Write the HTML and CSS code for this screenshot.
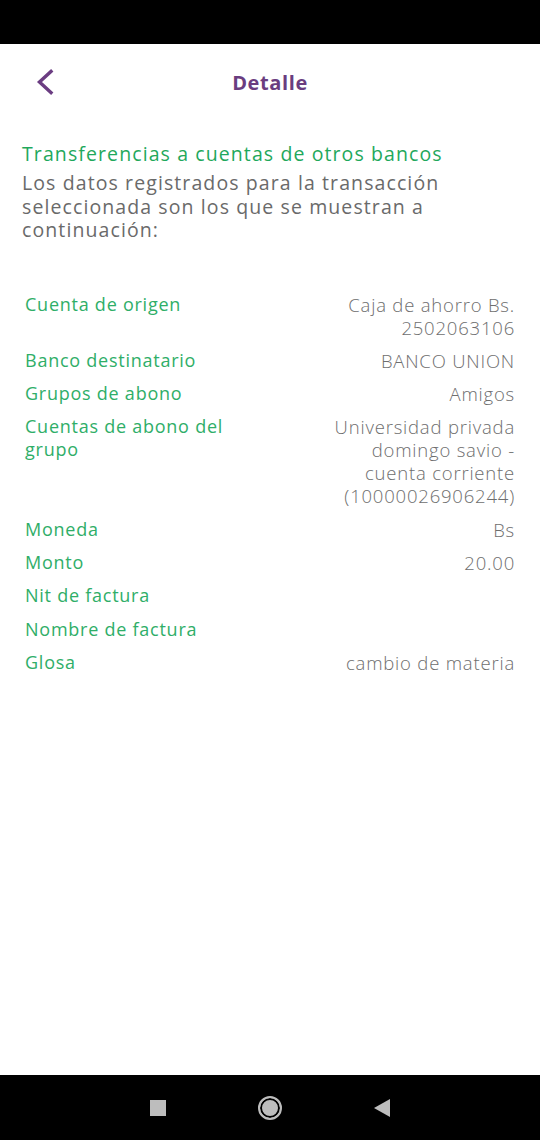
FILE: index.html
```html
<!DOCTYPE html>
<html lang="es">
<head>
<meta charset="utf-8">
<title>Detalle</title>
<link rel="stylesheet" href="styles.css">
</head>
<body>
<div class="screen">
  <div class="statusbar"></div>
  <main class="content">
    <header class="topbar">
      <button class="back" aria-label="Volver">
        <svg width="22" height="28" viewBox="0 0 22 28"><path d="M17 3.5 L5.5 14 L17 24.5" fill="none" stroke="#6b3d82" stroke-width="3.4" stroke-linecap="square" stroke-linejoin="miter"/></svg>
      </button>
      <h1 class="title">Detalle</h1>
    </header>
    <section class="intro">
      <h2 class="heading">Transferencias a cuentas de otros bancos</h2>
      <p class="desc">Los datos registrados para la transacción seleccionada son los que se muestran a continuación:</p>
    </section>
    <dl class="details">
      <div class="row"><dt>Cuenta de origen</dt><dd>Caja de ahorro Bs. 2502063106</dd></div>
      <div class="row"><dt>Banco destinatario</dt><dd>BANCO UNION</dd></div>
      <div class="row"><dt>Grupos de abono</dt><dd>Amigos</dd></div>
      <div class="row"><dt>Cuentas de abono del grupo</dt><dd>Universidad privada domingo savio - cuenta corriente (10000026906244)</dd></div>
      <div class="row"><dt>Moneda</dt><dd>Bs</dd></div>
      <div class="row"><dt>Monto</dt><dd>20.00</dd></div>
      <div class="row"><dt>Nit de factura</dt><dd></dd></div>
      <div class="row"><dt>Nombre de factura</dt><dd></dd></div>
      <div class="row"><dt>Glosa</dt><dd>cambio de materia</dd></div>
    </dl>
  </main>
  <nav class="navbar">
    <span class="nav-square"></span>
    <span class="nav-home"></span>
    <span class="nav-back"></span>
  </nav>
</div>
</body>
</html>
```

FILE: styles.css
```css
* { box-sizing: border-box; }
html, body { margin: 0; padding: 0; }
body {
  width: 540px;
  height: 1140px;
  background: #fff;
  font-family: "Open Sans", "Noto Sans", sans-serif;
  overflow: hidden;
}
.screen {
  display: flex;
  flex-direction: column;
  height: 1140px;
}
.statusbar {
  height: 44px;
  background: #000;
  flex: none;
}
.content {
  flex: 1;
  display: flex;
  flex-direction: column;
}
.topbar {
  position: relative;
  height: 76px;
  display: flex;
  align-items: center;
  justify-content: center;
}
.back {
  position: absolute;
  left: 34px;
  top: 24px;
  width: 22px;
  height: 28px;
  padding: 0;
  border: 0;
  background: none;
  display: flex;
  align-items: center;
  justify-content: center;
}
.title {
  margin: 0;
  font-size: 20px;
  font-weight: 700;
  color: #6a3d80;
  letter-spacing: 0.6px;
}
.intro {
  padding: 22px 22px 0 22px;
}
.heading {
  margin: 0 0 5px 0;
  font-size: 19.5px;
  font-weight: 400;
  color: #1fa85c;
  line-height: 24px;
  letter-spacing: 1.1px;
}
.desc {
  margin: 0;
  font-size: 19.5px;
  font-weight: 400;
  color: #6a6a6a;
  line-height: 23.5px;
  letter-spacing: 1.1px;
}
.details {
  margin: 51px 25px 0 25px;
  display: flex;
  flex-direction: column;
  gap: 10.3px;
}
.row {
  display: flex;
  justify-content: space-between;
  align-items: flex-start;
}
.row dt {
  width: 230px;
  font-size: 18px;
  line-height: 23px;
  color: #2fae68;
  letter-spacing: 0.75px;
}
.row dd {
  margin: 0;
  width: 200px;
  text-align: right;
  font-size: 18.5px;
  line-height: 23px;
  font-weight: 300;
  color: #6e6e6e;
  letter-spacing: 0.8px;
  min-height: 23px;
}
.navbar {
  height: 65px;
  background: #000;
  flex: none;
  display: flex;
  align-items: center;
  justify-content: center;
}
.navbar > span { display: block; }
.nav-square {
  width: 16px;
  height: 16px;
  background: #bdbdbd;
  margin-right: 92px;
}
.nav-home {
  width: 24px;
  height: 24px;
  border-radius: 50%;
  border: 2px solid #bdbdbd;
  background: #bdbdbd;
  box-shadow: inset 0 0 0 2px #000;
  margin-right: 92px;
}
.nav-back {
  width: 0;
  height: 0;
  border-top: 9px solid transparent;
  border-bottom: 9px solid transparent;
  border-right: 16px solid #bdbdbd;
}
```
